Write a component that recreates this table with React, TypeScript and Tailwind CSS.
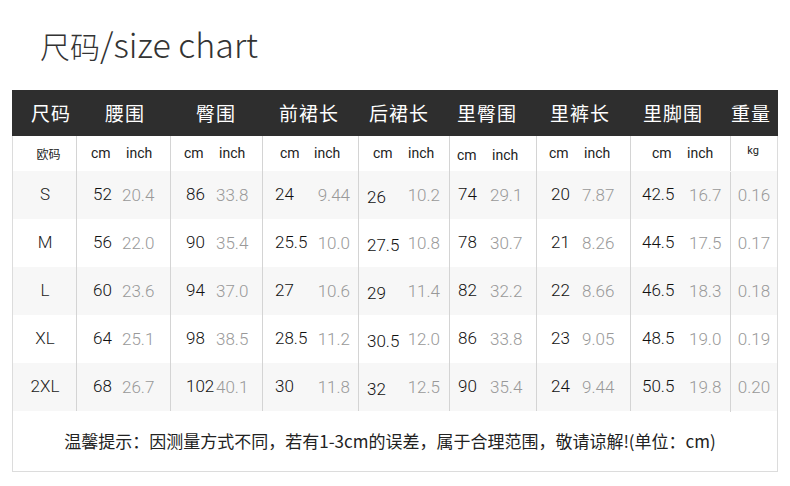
import React from "react";

type Col = { cell: string; cm: string; sub: string; subCm: string };

const cols: Col[] = [
  { cell: "w-[94px] pl-[16px]", cm: "w-[29px]", sub: "w-[94px] pl-[14px]", subCm: "w-[35px]" },
  { cell: "w-[92px] pl-[15px]", cm: "w-[30px]", sub: "w-[92px] pl-[13px]", subCm: "w-[35px]" },
  { cell: "w-[96px] pl-[12px] pr-[8px] justify-between", cm: "", sub: "w-[96px] pl-[17px]", subCm: "w-[34px]" },
  { cell: "w-[91px] pl-[8px] pr-[9px] justify-between", cm: "translate-y-[3px]", sub: "w-[91px] pl-[14px]", subCm: "w-[35px]" },
  { cell: "w-[87px] pl-[8px]", cm: "w-[32px]", sub: "w-[87px] pl-[7px] pt-[3px]", subCm: "w-[35px]" },
  { cell: "w-[94px] pl-[14px]", cm: "w-[31px]", sub: "w-[94px] pl-[12px]", subCm: "w-[35px]" },
  { cell: "w-[100px] pl-[11px]", cm: "w-[47px]", sub: "w-[100px] pl-[21px]", subCm: "w-[35px]" },
];

const headers: [string, string][] = [
  ["尺码", "w-[65px] pl-[19px]"],
  ["腰围", "w-[94px] pl-[28px]"],
  ["臀围", "w-[92px] pl-[25px]"],
  ["前裙长", "w-[96px] pl-[16px]"],
  ["后裙长", "w-[91px] pl-[10px]"],
  ["里臀围", "w-[87px] pl-[7px]"],
  ["里裤长", "w-[94px] pl-[13px]"],
  ["里脚围", "w-[100px] pl-[12px]"],
  ["重量", "w-[47px] pl-0"],
];

const rows: { size: string; vals: [string, string][]; kg: string }[] = [
  { size: "S", vals: [["52", "20.4"], ["86", "33.8"], ["24", "9.44"], ["26", "10.2"], ["74", "29.1"], ["20", "7.87"], ["42.5", "16.7"]], kg: "0.16" },
  { size: "M", vals: [["56", "22.0"], ["90", "35.4"], ["25.5", "10.0"], ["27.5", "10.8"], ["78", "30.7"], ["21", "8.26"], ["44.5", "17.5"]], kg: "0.17" },
  { size: "L", vals: [["60", "23.6"], ["94", "37.0"], ["27", "10.6"], ["29", "11.4"], ["82", "32.2"], ["22", "8.66"], ["46.5", "18.3"]], kg: "0.18" },
  { size: "XL", vals: [["64", "25.1"], ["98", "38.5"], ["28.5", "11.2"], ["30.5", "12.0"], ["86", "33.8"], ["23", "9.05"], ["48.5", "19.0"]], kg: "0.19" },
  { size: "2XL", vals: [["68", "26.7"], ["102", "40.1"], ["30", "11.8"], ["32", "12.5"], ["90", "35.4"], ["24", "9.44"], ["50.5", "19.8"]], kg: "0.20" },
];

const cjk = "font-[family-name:'Noto_Sans_CJK_SC','Noto_Sans',sans-serif]";
const num = "font-[family-name:Roboto,'Noto_Sans_CJK_SC',sans-serif]";

export default function App() {
  return (
    <div className={"w-[790px] h-[486px] bg-white overflow-hidden " + cjk}>
      <div className="pl-[40px] pt-[22px] h-[90px] text-[30px] leading-[44px] text-[#333] font-light whitespace-nowrap">
        尺码<span className="text-[34px]">/size chart</span>
      </div>
      <div className="ml-[12px] w-[766px] border border-t-0 border-[#dcdcdc]">
        {/* header */}
        <div className="flex h-[46px] bg-[#2e2e2e] text-white text-[19px] items-center -mx-px">
          {headers.map(([t, cls]) => (
            <div key={t} className={"whitespace-nowrap tracking-[1px] " + cls}>
              {t}
            </div>
          ))}
        </div>
        {/* sub header */}
        <div className={"flex h-[35px] bg-white text-[#222] text-[14px] " + num}>
          <div className={"w-[63px] flex items-center justify-center text-[12px] pl-[8px] " + cjk}>欧码</div>
          {cols.map((c, i) => (
            <div key={i} className={"flex items-center border-l border-[#d4d4d4] " + c.sub}>
              <span className={c.subCm}>cm</span>
              <span>inch</span>
            </div>
          ))}
          <div className="flex-1 border-l border-[#d4d4d4] flex justify-center pt-[7px] text-[11px] pr-[2px]">kg</div>
        </div>
        {/* data rows */}
        {rows.map((r, ri) => (
          <div
            key={r.size}
            className={"flex h-[48px] text-[17px] " + num + " " + (ri % 2 === 0 ? "bg-[#f7f7f7]" : "bg-white")}
          >
            <div className="w-[63px] flex items-center justify-center text-[#222] font-light pl-[1px]">{r.size}</div>
            {cols.map((c, i) => (
              <div key={i} className={"flex items-center border-l border-[#d4d4d4] " + c.cell}>
                <span className={"text-[#111] font-light " + c.cm}>{r.vals[i][0]}</span>
                <span className="text-[#999] font-light translate-y-[1px]">{r.vals[i][1]}</span>
              </div>
            ))}
            <div className="flex-1 border-l border-[#d4d4d4] flex items-center justify-center text-[#999] font-light translate-y-[1px]">
              {r.kg}
            </div>
          </div>
        ))}
        {/* footer */}
        <div className="h-[60px] flex items-center justify-center pr-[10px] text-[17px] text-[#222] whitespace-nowrap">
          温馨提示：因测量方式不同，若有1-3cm的误差，属于合理范围，敬请谅解!(单位：cm)
        </div>
      </div>
    </div>
  );
}
